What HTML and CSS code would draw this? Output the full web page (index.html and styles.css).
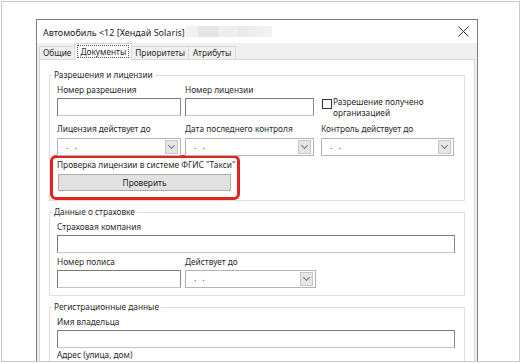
FILE: index.html
```html
<!DOCTYPE html>
<html lang="ru">
<head>
  <meta charset="UTF-8" />
  <title>Автомобиль</title>
  <link rel="stylesheet" href="styles.css">
</head>
<body>
  <div class="frame">
    <div class="window">
      <div class="titlebar">
        <span class="title">Автомобиль &lt;12 [Хендай Solaris]</span>
        <span class="plate"></span>
        <svg class="close" width="11" height="11" viewBox="0 0 11 11">
          <path d="M0.5 0.5 L10.5 10.5 M10.5 0.5 L0.5 10.5" stroke="#333" stroke-width="1" fill="none"/>
        </svg>
      </div>
      <div class="body">
        <div class="tabs">
          <div class="tab">Общие</div>
          <div class="tab active"><span class="focus">Документы</span></div>
          <div class="tab">Приоритеты</div>
          <div class="tab">Атрибуты</div>
        </div>
        <div class="panel">

          <fieldset class="group g1">
            <legend>Разрешения и лицензии</legend>
            <div class="grid">
              <div class="field">
                <label>Номер разрешения</label>
                <div class="input w124"></div>
              </div>
              <div class="field">
                <label>Номер лицензии</label>
                <div class="input w129"></div>
              </div>
              <div class="check-field">
                <span class="checkbox"></span>
                <span class="check-text">Разрешение получено<br>организацией</span>
              </div>
            </div>
            <div class="grid row2">
              <div class="field">
                <label>Лицензия действует до</label>
                <div class="input date w124"><span>. .</span><span class="drop"></span></div>
              </div>
              <div class="field">
                <label>Дата последнего контроля</label>
                <div class="input date w129"><span>. .</span><span class="drop"></span></div>
              </div>
              <div class="field col3">
                <label>Контроль действует до</label>
                <div class="input date w133"><span>. .</span><span class="drop"></span></div>
              </div>
            </div>
            <div class="verify">
              <label>Проверка лицензии в системе ФГИС "Такси"</label>
              <button type="button">Проверить</button>
            </div>
          </fieldset>

          <fieldset class="group g2">
            <legend>Данные о страховке</legend>
            <div class="field">
              <label>Страховая компания</label>
              <div class="input wide"></div>
            </div>
            <div class="grid row-ins">
              <div class="field">
                <label>Номер полиса</label>
                <div class="input w124"></div>
              </div>
              <div class="field">
                <label>Действует до</label>
                <div class="input date w131"><span>. .</span><span class="drop"></span></div>
              </div>
            </div>
          </fieldset>

          <fieldset class="group g3">
            <legend>Регистрационные данные</legend>
            <div class="field">
              <label>Имя владельца</label>
              <div class="input wide"></div>
            </div>
            <div class="field addr">
              <label>Адрес (улица, дом)</label>
              <div class="input wide"></div>
            </div>
          </fieldset>

        </div>
      </div>
    </div>
  </div>
</body>
</html>
```

FILE: styles.css
```css
* {
  box-sizing: border-box;
}

body {
  margin: 0;
  padding: 1px;
  background: #fff;
  font-family: 'Noto Sans', 'Open Sans', sans-serif;
  font-size: 8.3px;
  color: #2a2a2a;
}

.frame {
  width: 519px;
  height: 361px;
  border: 1px solid #c9c9c9;
  overflow: hidden;
}

.window {
  margin: 17px 0 0 34px;
  width: 442px;
  height: 420px;
  border: 1px solid #7c7c7c;
  background: #f0f0f0;
}

/* title bar */
.titlebar {
  height: 23px;
  background: #fff;
  display: flex;
  align-items: center;
  padding-left: 6px;
}

.title {
  font-size: 9px;
  color: #222;
  padding-top: 1px;
}

.plate {
  width: 86px;
  height: 11px;
  margin-left: 1px;
  background: linear-gradient(90deg, #f1f1f1 0, #f1f1f1 12px, #e5e5e5 12px, #e5e5e5 32px, #eeeeee 32px, #eeeeee 52px, #e8e8e8 52px, #f3f3f3 86px);
}

.close {
  margin-left: auto;
  margin-right: 8px;
}

/* tabs */
.tabs {
  height: 16px;
  display: flex;
  align-items: flex-end;
  padding-left: 2px;
  position: relative;
  z-index: 1;
}

.tab {
  height: 13px;
  line-height: 11px;
  padding: 0 3px;
  border: 1px solid #d9d9d9;
  border-bottom: none;
  background: #f0f0f0;
  font-size: 8.3px;
}

.tab + .tab {
  margin-left: -1px;
}

.tab.active {
  height: 17px;
  margin-bottom: -1px;
  background: #fff;
  padding: 1px 2px 0;
  z-index: 2;
}

.focus {
  display: inline-block;
  border: 1px dotted #555;
  padding: 0 2px;
  line-height: 11px;
}

.tab:last-child {
  padding: 0 4px;
}

.panel {
  margin: 0 2px;
  background: #fff;
  border: 1px solid #d9d9d9;
  padding-top: 9px;
  height: 360px;
}

/* group boxes */
.group {
  margin: 0 9px;
  padding: 3px 8px 0 7px;
  border: 1px solid #dedede;
  min-width: 0;
}

.group legend {
  padding: 0 2px;
  margin-left: -5px;
  line-height: 12px;
}

.g1 {
  padding-bottom: 0;
}

.g2 {
  margin-top: 5px;
  padding-bottom: 7px;
}

.g3 {
  margin-top: 5px;
}

.grid {
  display: grid;
  grid-template-columns: 128px 136px 133px;
}

.row2 {
  margin-top: 7px;
}

.row2 .field {
  gap: 3px;
}

.row-ins {
  margin-top: 3px;
}

.field {
  display: flex;
  flex-direction: column;
  gap: 2px;
}

.field label,
.verify label {
  line-height: 12px;
  height: 12px;
  white-space: nowrap;
}

.addr {
  margin-top: 1px;
}

.input {
  height: 18px;
  border: 1px solid #7a7a7a;
  border-bottom-color: #c4c4c4;
  border-right-color: #8a8a8a;
  background: #fff;
}

.w124 { width: 124px; }
.w129 { width: 129px; }
.w131 { width: 131px; }
.w133 { width: 133px; }
.wide { width: 398px; }

.date {
  display: flex;
  align-items: center;
  padding: 1px 2px 1px 8px;
  border-color: #b4b4b4;
}

.date span:first-child {
  letter-spacing: 2px;
  line-height: 10px;
  margin-top: -2px;
}

.drop {
  margin-left: auto;
  width: 13px;
  height: 14px;
  background: #e6e6e6;
  border: 1px solid #c6c6c6;
  position: relative;
}

.drop::after {
  content: "";
  position: absolute;
  left: 3px;
  top: 2px;
  width: 4px;
  height: 4px;
  border-right: 1px solid #777;
  border-bottom: 1px solid #777;
  transform: rotate(45deg);
}

.check-field {
  display: flex;
  align-items: flex-start;
  height: 32px;
  padding-top: 12px;
}

.checkbox {
  flex: none;
  width: 10px;
  height: 10px;
  border: 1px solid #333;
  margin: 3px 1px 0 1px;
  background: #fff;
}

.check-text {
  line-height: 11px;
}

/* annotated license check */
.verify {
  margin: -1px 0 0 -7px;
  width: 190px;
  border: 3px solid #e2231f;
  border-radius: 6px;
  padding: 1px 4px 6px 4px;
}

.verify button {
  display: block;
  margin: 3px 0 0 1px;
  width: 173px;
  height: 17px;
  border: 1px solid #adadad;
  background: #e1e1e1;
  font-family: inherit;
  font-size: 8.3px;
  color: #222;
  padding: 0;
}
```
